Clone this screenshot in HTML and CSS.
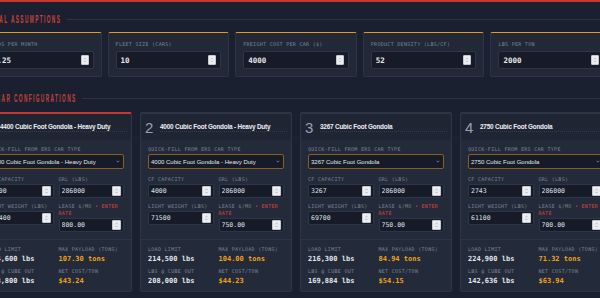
FILE: index.html
```html
<!DOCTYPE html>
<html lang="en">
<head>
<meta charset="UTF-8">
<meta name="viewport" content="width=device-width, initial-scale=1.0">
<title>Gondola Fleet Cost Calculator</title>
<link rel="stylesheet" href="styles.css">
</head>
<body>

<div class="top-bar"></div>

<main class="page">
  <h2 class="section-head">
    <span class="section-title section-title--global"><span>GLOBAL ASSUMPTIONS</span></span>
  </h2>

  <div class="assumptions">
    <div class="assumption">
      <label class="label">Loads per month</label>
      <div class="field"><input type="text" value="1.25"><span class="spin"><svg viewBox="0 0 8 10"><path d="M2.5 4 4 2.5 5.5 4M2.5 6 4 7.5 5.5 6"/></svg></span></div>
    </div>
    <div class="assumption">
      <label class="label">Fleet size (cars)</label>
      <div class="field"><input type="text" value="10"><span class="spin"><svg viewBox="0 0 8 10"><path d="M2.5 4 4 2.5 5.5 4M2.5 6 4 7.5 5.5 6"/></svg></span></div>
    </div>
    <div class="assumption">
      <label class="label">Freight cost per car ($)</label>
      <div class="field"><input type="text" value="4000"><span class="spin"><svg viewBox="0 0 8 10"><path d="M2.5 4 4 2.5 5.5 4M2.5 6 4 7.5 5.5 6"/></svg></span></div>
    </div>
    <div class="assumption">
      <label class="label">Product density (lbs/cf)</label>
      <div class="field"><input type="text" value="52"><span class="spin"><svg viewBox="0 0 8 10"><path d="M2.5 4 4 2.5 5.5 4M2.5 6 4 7.5 5.5 6"/></svg></span></div>
    </div>
    <div class="assumption">
      <label class="label">Lbs per ton</label>
      <div class="field"><input type="text" value="2000"><span class="spin"><svg viewBox="0 0 8 10"><path d="M2.5 4 4 2.5 5.5 4M2.5 6 4 7.5 5.5 6"/></svg></span></div>
    </div>
  </div>

  <h2 class="section-head section-head--cars">
    <span class="section-title section-title--cars"><span>ERS CAR CONFIGURATIONS</span></span>
  </h2>

  <div class="cars">
    <!-- car 1 -->
    <div class="car car--active">
      <div class="car-head"><span class="car-num">1</span><span class="car-title">4400 Cubic Foot Gondola - Heavy Duty</span></div>
      <div class="car-body">
        <label class="label">Quick-fill from ERS car type</label>
        <div class="select"><span>4400 Cubic Foot Gondola - Heavy Duty</span><svg viewBox="0 0 6 4"><path d="M1 1 3 3 5 1"/></svg></div>
        <div class="pair">
          <div><label class="label">CF capacity</label><div class="field field--sm"><input type="text" value="4400"><span class="spin"><svg viewBox="0 0 8 10"><path d="M2.5 4 4 2.5 5.5 4M2.5 6 4 7.5 5.5 6"/></svg></span></div></div>
          <div><label class="label">GRL (lbs)</label><div class="field field--sm"><input type="text" value="286000"><span class="spin"><svg viewBox="0 0 8 10"><path d="M2.5 4 4 2.5 5.5 4M2.5 6 4 7.5 5.5 6"/></svg></span></div></div>
          <div><label class="label">Light weight (lbs)</label><div class="field field--sm"><input type="text" value="71400"><span class="spin"><svg viewBox="0 0 8 10"><path d="M2.5 4 4 2.5 5.5 4M2.5 6 4 7.5 5.5 6"/></svg></span></div></div>
          <div><label class="label">Lease $/mo <span class="warn">&bull; Enter rate</span></label><div class="field field--sm"><input type="text" value="800.00"><span class="spin"><svg viewBox="0 0 8 10"><path d="M2.5 4 4 2.5 5.5 4M2.5 6 4 7.5 5.5 6"/></svg></span></div></div>
        </div>
      </div>
      <div class="car-stats">
        <div><span class="label">Load limit</span><span class="stat">214,600 lbs</span></div>
        <div><span class="label">Max payload (tons)</span><span class="stat stat--hot">107.30 tons</span></div>
        <div><span class="label">Lbs @ cube out</span><span class="stat">228,800 lbs</span></div>
        <div><span class="label">Net cost/ton</span><span class="stat stat--hot">$43.24</span></div>
      </div>
    </div>

    <!-- car 2 -->
    <div class="car">
      <div class="car-head"><span class="car-num">2</span><span class="car-title">4000 Cubic Foot Gondola - Heavy Duty</span></div>
      <div class="car-body">
        <label class="label">Quick-fill from ERS car type</label>
        <div class="select"><span>4000 Cubic Foot Gondola - Heavy Duty</span><svg viewBox="0 0 6 4"><path d="M1 1 3 3 5 1"/></svg></div>
        <div class="pair">
          <div><label class="label">CF capacity</label><div class="field field--sm"><input type="text" value="4000"><span class="spin"><svg viewBox="0 0 8 10"><path d="M2.5 4 4 2.5 5.5 4M2.5 6 4 7.5 5.5 6"/></svg></span></div></div>
          <div><label class="label">GRL (lbs)</label><div class="field field--sm"><input type="text" value="286000"><span class="spin"><svg viewBox="0 0 8 10"><path d="M2.5 4 4 2.5 5.5 4M2.5 6 4 7.5 5.5 6"/></svg></span></div></div>
          <div><label class="label">Light weight (lbs)</label><div class="field field--sm"><input type="text" value="71500"><span class="spin"><svg viewBox="0 0 8 10"><path d="M2.5 4 4 2.5 5.5 4M2.5 6 4 7.5 5.5 6"/></svg></span></div></div>
          <div><label class="label">Lease $/mo <span class="warn">&bull; Enter rate</span></label><div class="field field--sm"><input type="text" value="750.00"><span class="spin"><svg viewBox="0 0 8 10"><path d="M2.5 4 4 2.5 5.5 4M2.5 6 4 7.5 5.5 6"/></svg></span></div></div>
        </div>
      </div>
      <div class="car-stats">
        <div><span class="label">Load limit</span><span class="stat">214,500 lbs</span></div>
        <div><span class="label">Max payload (tons)</span><span class="stat stat--hot">104.00 tons</span></div>
        <div><span class="label">Lbs @ cube out</span><span class="stat">208,000 lbs</span></div>
        <div><span class="label">Net cost/ton</span><span class="stat stat--hot">$44.23</span></div>
      </div>
    </div>

    <!-- car 3 -->
    <div class="car">
      <div class="car-head"><span class="car-num">3</span><span class="car-title">3267 Cubic Foot Gondola</span></div>
      <div class="car-body">
        <label class="label">Quick-fill from ERS car type</label>
        <div class="select"><span>3267 Cubic Foot Gondola</span><svg viewBox="0 0 6 4"><path d="M1 1 3 3 5 1"/></svg></div>
        <div class="pair">
          <div><label class="label">CF capacity</label><div class="field field--sm"><input type="text" value="3267"><span class="spin"><svg viewBox="0 0 8 10"><path d="M2.5 4 4 2.5 5.5 4M2.5 6 4 7.5 5.5 6"/></svg></span></div></div>
          <div><label class="label">GRL (lbs)</label><div class="field field--sm"><input type="text" value="286000"><span class="spin"><svg viewBox="0 0 8 10"><path d="M2.5 4 4 2.5 5.5 4M2.5 6 4 7.5 5.5 6"/></svg></span></div></div>
          <div><label class="label">Light weight (lbs)</label><div class="field field--sm"><input type="text" value="69700"><span class="spin"><svg viewBox="0 0 8 10"><path d="M2.5 4 4 2.5 5.5 4M2.5 6 4 7.5 5.5 6"/></svg></span></div></div>
          <div><label class="label">Lease $/mo <span class="warn">&bull; Enter rate</span></label><div class="field field--sm"><input type="text" value="750.00"><span class="spin"><svg viewBox="0 0 8 10"><path d="M2.5 4 4 2.5 5.5 4M2.5 6 4 7.5 5.5 6"/></svg></span></div></div>
        </div>
      </div>
      <div class="car-stats">
        <div><span class="label">Load limit</span><span class="stat">216,300 lbs</span></div>
        <div><span class="label">Max payload (tons)</span><span class="stat stat--hot">84.94 tons</span></div>
        <div><span class="label">Lbs @ cube out</span><span class="stat">169,884 lbs</span></div>
        <div><span class="label">Net cost/ton</span><span class="stat stat--hot">$54.15</span></div>
      </div>
    </div>

    <!-- car 4 -->
    <div class="car">
      <div class="car-head"><span class="car-num">4</span><span class="car-title">2750 Cubic Foot Gondola</span></div>
      <div class="car-body">
        <label class="label">Quick-fill from ERS car type</label>
        <div class="select"><span>2750 Cubic Foot Gondola</span><svg viewBox="0 0 6 4"><path d="M1 1 3 3 5 1"/></svg></div>
        <div class="pair">
          <div><label class="label">CF capacity</label><div class="field field--sm"><input type="text" value="2743"><span class="spin"><svg viewBox="0 0 8 10"><path d="M2.5 4 4 2.5 5.5 4M2.5 6 4 7.5 5.5 6"/></svg></span></div></div>
          <div><label class="label">GRL (lbs)</label><div class="field field--sm"><input type="text" value="286000"><span class="spin"><svg viewBox="0 0 8 10"><path d="M2.5 4 4 2.5 5.5 4M2.5 6 4 7.5 5.5 6"/></svg></span></div></div>
          <div><label class="label">Light weight (lbs)</label><div class="field field--sm"><input type="text" value="61100"><span class="spin"><svg viewBox="0 0 8 10"><path d="M2.5 4 4 2.5 5.5 4M2.5 6 4 7.5 5.5 6"/></svg></span></div></div>
          <div><label class="label">Lease $/mo <span class="warn">&bull; Enter rate</span></label><div class="field field--sm"><input type="text" value="700.00"><span class="spin"><svg viewBox="0 0 8 10"><path d="M2.5 4 4 2.5 5.5 4M2.5 6 4 7.5 5.5 6"/></svg></span></div></div>
        </div>
      </div>
      <div class="car-stats">
        <div><span class="label">Load limit</span><span class="stat">224,900 lbs</span></div>
        <div><span class="label">Max payload (tons)</span><span class="stat stat--hot">71.32 tons</span></div>
        <div><span class="label">Lbs @ cube out</span><span class="stat">142,636 lbs</span></div>
        <div><span class="label">Net cost/ton</span><span class="stat stat--hot">$63.94</span></div>
      </div>
    </div>
  </div>
</main>

</body>
</html>
```

FILE: styles.css
```css
body {
  margin: 0;
  background-color: #1b2030;
  font-family: "DejaVu Sans Mono", monospace;
  overflow: hidden;
}
.top-bar {
  height: 2px;
  background-color: #c9372c;
}
.page {
  width: 632px;
  margin-left: -20px;
}

/* section headings */
.section-head {
  display: flex;
  align-items: center;
  gap: 5px;
  height: 11px;
  margin: 12px 0 7px;
}
.section-head::after {
  content: "";
  flex: 1;
  height: 1px;
  background-color: #2c3343;
}
.section-head--cars {
  gap: 6px;
  margin: 16px 0 8px;
}
.section-title {
  flex: none;
  white-space: nowrap;
  color: #c8433a;
  font: bold 11px/11px "Liberation Sans", sans-serif;
}
.section-title span {
  display: inline-block;
  letter-spacing: 3.3px;
  transform: scaleX(0.43);
  transform-origin: 0 50%;
}
.section-title--global {
  width: 82px;
}
.section-title--cars {
  width: 96px;
}

/* labels + inputs */
.label {
  display: block;
  font-size: 5px;
  line-height: 7px;
  letter-spacing: 0.3px;
  color: #7c8597;
  text-transform: uppercase;
  margin-bottom: 1px;
}
.warn {
  color: #d9473b;
}
.field {
  display: flex;
  align-items: center;
  height: 18px;
  box-sizing: border-box;
  padding: 0 4px;
  background-color: #161b27;
  border: 1px solid #2e3546;
  border-radius: 2px;
}
.field input {
  flex: 1;
  width: 0;
  min-width: 0;
  padding: 0;
  border: none;
  background: none;
  outline: none;
  color: #e8ebf0;
  font: bold 7.5px "DejaVu Sans Mono", monospace;
}
.spin {
  flex: none;
  display: flex;
  width: 8px;
  height: 10px;
  box-sizing: border-box;
  background-color: #eceef1;
  border: 1px solid #c3c7ce;
  border-radius: 1px;
}
.spin svg {
  width: 100%;
  height: 100%;
  fill: none;
  stroke: #8d929b;
  stroke-width: 0.7;
}
.field--sm {
  height: 14px;
  padding: 0 2px;
}
.field--sm input {
  font-weight: normal;
  font-size: 6.5px;
  color: #dde1e8;
}
.field--sm .spin {
  width: 9px;
}

/* global assumptions */
.assumptions {
  display: grid;
  grid-template-columns: repeat(5, minmax(0, 1fr));
  gap: 6px;
}
.assumption {
  padding: 8px 7px 7px;
  background-color: #222837;
  border: 1px solid #2d3445;
  border-top-color: #e59a1d;
  border-radius: 2px;
}
.assumption .label {
  margin-bottom: 3px;
}

/* car cards */
.cars {
  display: grid;
  grid-template-columns: repeat(4, minmax(0, 1fr));
  gap: 8px;
}
.car {
  background-color: #232a39;
  border: 1px solid #2e3546;
  border-top-width: 2px;
  border-radius: 2px;
}
.car--active {
  border-top-color: #c9382e;
}
.car-head {
  display: flex;
  align-items: center;
  gap: 7px;
  height: 26px;
  padding: 0 4px;
  background-color: #1f2533;
}
.car-num {
  width: 8px;
  color: #97a0b3;
  font: 15px/1 "Liberation Sans", sans-serif;
}
.car-title {
  flex: 1;
  min-width: 0;
  color: #eef0f4;
  font: bold 6.4px/9px "Liberation Sans", sans-serif;
  letter-spacing: -0.2px;
  white-space: nowrap;
  border-bottom: 1px dotted #333b4c;
}
.car-body {
  padding: 6px 7px 7px;
}
.select {
  display: flex;
  align-items: center;
  justify-content: space-between;
  height: 15px;
  box-sizing: border-box;
  margin-top: 1px;
  padding: 0 3px 0 2px;
  background-color: #161b27;
  border: 1px solid #8a5d22;
  border-radius: 2px;
  color: #e5e8ee;
  font: 6px "Liberation Sans", sans-serif;
  white-space: nowrap;
  overflow: hidden;
}
.select svg {
  flex: none;
  width: 4px;
  height: 3px;
  fill: none;
  stroke: #c5cad3;
  stroke-width: 0.8;
}
.pair {
  display: grid;
  grid-template-columns: minmax(0, 1fr) minmax(0, 1fr);
  column-gap: 5px;
  row-gap: 4.5px;
  align-items: start;
  margin-top: 7px;
}
.car-stats {
  display: grid;
  grid-template-columns: minmax(0, 1fr) minmax(0, 1fr);
  column-gap: 5px;
  row-gap: 4px;
  padding: 6px 7px 5px;
  border-top: 1px solid #2e3546;
}
.stat {
  display: block;
  color: #e4e7ed;
  font: bold 7px/10px "DejaVu Sans Mono", monospace;
  white-space: nowrap;
}
.stat--hot {
  color: #f0a01e;
}
```
